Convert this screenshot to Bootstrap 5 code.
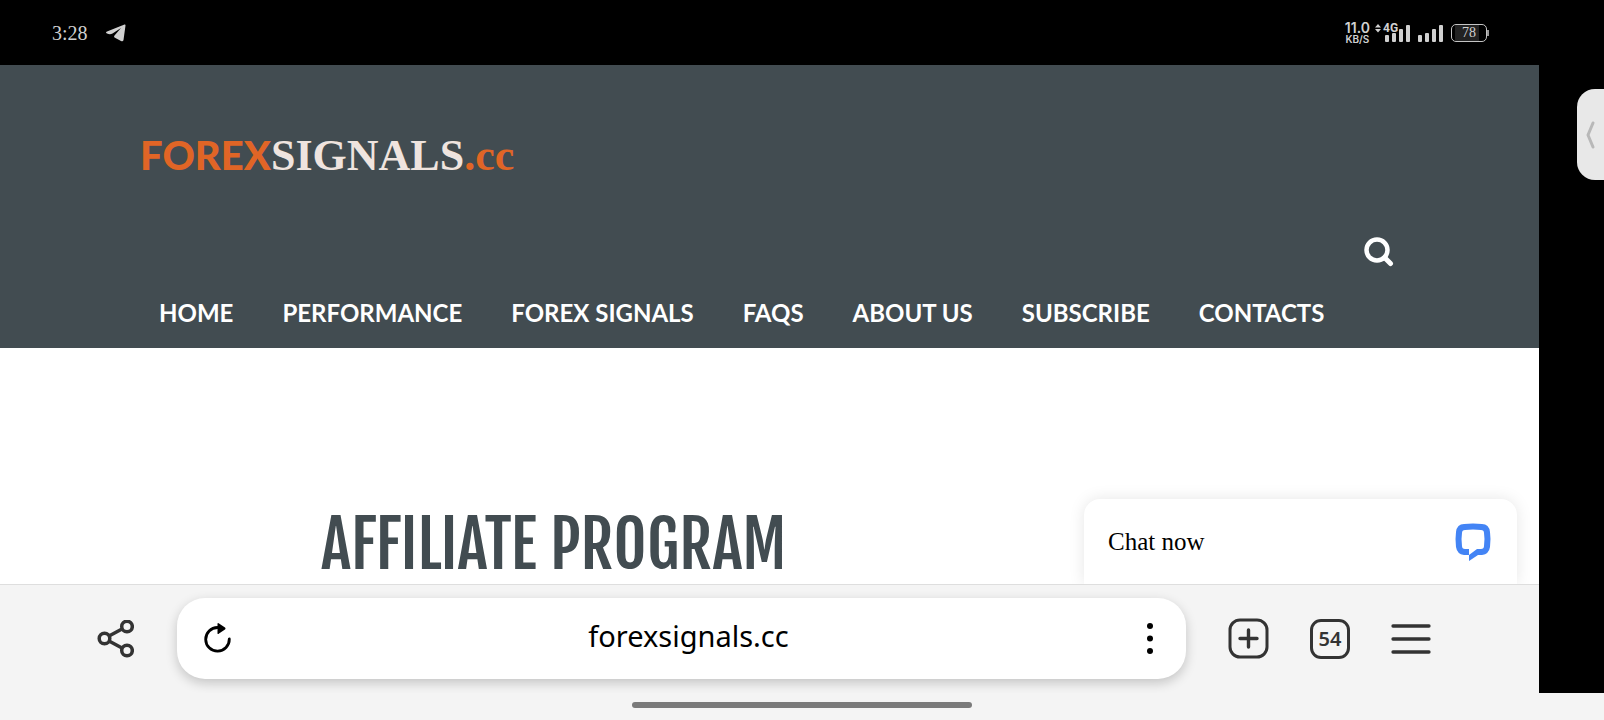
<!DOCTYPE html>
<html lang="en">
<head>
<meta charset="utf-8">
<meta name="viewport" content="width=device-width, initial-scale=1">
<title>Affiliate Program - forexsignals.cc</title>
<link href="https://cdn.jsdelivr.net/npm/bootstrap@5.3.0/dist/css/bootstrap.min.css" rel="stylesheet">
<style>
  :root { --slate: #424c51; --chrome: #f4f4f4; --ink: #333; --gutter: 65px; }
  body { background: #000; font-family: "Lato", sans-serif; color: var(--slate); }
  svg { display: block; }
  .status-bar { height: 65px; padding: 0 117px 0 52px; color: #d0d0d0; }
  .clock { font: 20px/24px "Liberation Serif", serif; }
  .net-speed { font: 600 14px/12px "Inter", sans-serif; text-align: center; }
  .net-speed small { display: block; font-size: 10px; line-height: 10px; font-weight: 600; }
  .net-type { position: absolute; left: 9px; top: -2px; font: 700 12px/12px "Roboto", sans-serif; }
  .battery { width: 36px; height: 18px; border: 1px solid #c4c4c4; border-radius: 5px; font: 14px/16px "Liberation Serif", serif; }
  .battery span { background: #222; width: 24px; margin-left: 3px; padding-left: 7px; }
  .battery::after { content: ""; position: absolute; right: -3px; top: 5px; width: 2px; height: 6px; background: #999; }
  .viewport-col { margin-right: var(--gutter); }
  .site-header { background: var(--slate); padding: 64px 140px 13px; }
  .logo { font-size: 40px; line-height: 52px; font-weight: 900; color: #e06526; }
  .logo .signals { font: 700 44px/52px "Liberation Serif", serif; color: #efe4df; }
  .logo .tld { font: 700 44px/52px "Liberation Serif", serif; }
  .search-row { padding: 55px 5px 0 0; }
  .site-nav { column-gap: 49px; padding-left: 19px; }
  .site-nav a { font-size: 24px; line-height: 44px; font-weight: 700; color: #fff; white-space: nowrap; }
  .page-title { font: 600 64px/72px "Fjalla One", "Roboto Condensed", "Roboto", sans-serif; margin: 0 0 0 321px; padding-top: 161px; }
  .chat { position: absolute; right: 22px; bottom: 0; width: 433px; height: 85px; padding: 0 26px 0 24px; border-radius: 16px 16px 0 0; box-shadow: 0 0 16px rgba(0,0,0,.1); font: 25px/32px "Liberation Serif", serif; color: #000; }
  .browser-bar { background: var(--chrome); border-top: 1px solid #dedede; padding: 13px 108px 14px 97px; height: 109px; }
  .address { height: 81px; border-radius: 28px; margin: 0 42px 0 43px; padding: 0 30px 0 26px; box-shadow: 0 4px 12px rgba(0,0,0,.2); }
  .address input { font: 29px/40px "Noto Sans", sans-serif; color: #000; min-width: 0; padding: 0 0 6px; }
  .browser-bar, .browser-bar svg { color: var(--ink); }
  .tabs-count { width: 40px; height: 40px; margin: 0 41px; border: 3px solid var(--ink); border-radius: 11px; font: 600 20px/32px "Noto Sans", sans-serif; color: var(--ink); }
  .gesture { background: var(--chrome); height: 27px; padding-top: 9px; }
  .gesture span { width: 340px; height: 6px; border-radius: 3px; background: #7a7a7a; }
  .edge-handle { position: absolute; right: 0; top: 89px; width: 27px; height: 91px; border-radius: 18px 0 0 18px; background: #e8e8e8; padding-left: 8px; }
</style>
</head>
<body class="min-vh-100 d-flex flex-column position-relative overflow-hidden">
  <div class="status-bar d-flex align-items-center">
    <span class="clock">3:28</span>
    <svg class="ms-3" width="22" height="18" viewBox="0 0 22 18" fill="#d0d0d0"><path d="M20.500 .5Q21.500 0 21.500 1.500L19.500 16Q19 18 17 17L10.500 13.500Q9.500 12.500 10.500 11.500L17 4 8.500 9.500Q6 11 3 9.500 1 8.500 3 7.500Z"/></svg>
    <div class="ms-auto d-flex align-items-center">
      <div class="net-speed">11.0<small>KB/S</small></div>
      <div class="position-relative ms-1">
        <span class="net-type">4G</span>
        <svg width="36" height="18" viewBox="0 0 36 18" fill="#d0d0d0"><path d="M1 3.500 4 0 7 3.500ZM1 5 4 8.500 7 5Z"/><rect x="11" y="11" width="4" height="7" rx="1"/><rect x="18" y="9" width="4" height="9" rx="1"/><rect x="25" y="5" width="4" height="13" rx="1"/><rect x="32" y="1" width="4" height="17" rx="1"/></svg>
      </div>
      <svg class="ms-2" width="25" height="18" viewBox="0 0 25 18" fill="#d0d0d0"><rect y="11" width="4" height="7" rx="1"/><rect x="7" y="9" width="4" height="9" rx="1"/><rect x="14" y="5" width="4" height="13" rx="1"/><rect x="21" y="1" width="4" height="17" rx="1"/></svg>
      <div class="battery position-relative ms-2 d-flex"><span>78</span></div>
    </div>
  </div>

  <div class="viewport-col flex-grow-1 d-flex flex-column">
    <header class="site-header">
      <a class="logo d-inline-flex align-items-baseline text-decoration-none" href="#"><span>FOREX</span><span class="signals">SIGNALS</span><span class="tld">.cc</span></a>
      <div class="search-row d-flex justify-content-end">
        <button class="btn p-0 border-0" type="button" aria-label="Search"><svg width="30" height="30" viewBox="0 0 30 30" fill="none" stroke="#fff"><circle cx="13" cy="13" r="10.500" stroke-width="4.500"/><path d="M20.500 20.500 26.500 26.500" stroke-width="5" stroke-linecap="round"/></svg></button>
      </div>
      <nav class="site-nav d-flex mt-4">
        <a class="text-decoration-none" href="#">HOME</a><a class="text-decoration-none" href="#">PERFORMANCE</a><a class="text-decoration-none" href="#">FOREX SIGNALS</a><a class="text-decoration-none" href="#">FAQS</a><a class="text-decoration-none" href="#">ABOUT US</a><a class="text-decoration-none" href="#">SUBSCRIBE</a><a class="text-decoration-none" href="#">CONTACTS</a>
      </nav>
    </header>
    <main class="bg-white flex-grow-1 position-relative overflow-hidden">
      <h1 class="page-title">AFFILIATE PROGRAM</h1>
      <button class="chat bg-white border-0 d-flex align-items-center justify-content-between" type="button">
        <span>Chat now</span>
        <svg width="36" height="38" viewBox="0 0 36 38" fill="#4384f5"><path fill-rule="evenodd" d="M9 1Q18 0 27 1 34 1 35 9 36 16 35 24 34 31 27 32H23L14 38V32H9Q2 31 1 24 0 16 1 9 2 1 9 1ZM10 7Q7 7 7 10 6 16 7 23 7 26 10 26H14V32L22 26H26Q29 26 29 23 30 16 29 10 29 7 26 7 18 6 10 7Z"/></svg>
      </button>
    </main>
    <div class="browser-bar d-flex align-items-center">
      <button class="btn p-0 border-0" type="button" aria-label="Share"><svg width="37" height="38" viewBox="0 0 37 38" fill="none" stroke="currentColor" stroke-width="3.500"><circle cx="7.500" cy="18.500" r="5.300"/><circle cx="30" cy="6.500" r="5.300"/><circle cx="30" cy="30.500" r="5.300"/><path d="M12 16 25 9M12 21 25 28"/></svg></button>
      <div class="address bg-white flex-grow-1 d-flex align-items-center">
        <button class="btn p-0 border-0" type="button" aria-label="Reload"><svg width="30" height="32" viewBox="0 0 30 32"><path d="M14.500 4.500A11.800 11.800 0 1 0 26.300 16" fill="none" stroke="#000" stroke-width="2.800" stroke-linecap="round"/><path d="M14.500 .5Q15 -.5 16 .5L22 4.500Q23 5.500 22 6.500L16 10.500Q15 11.500 14.500 10.500Z" fill="#000"/></svg></button>
        <input class="flex-grow-1 border-0 bg-transparent text-center" type="text" value="forexsignals.cc" aria-label="Address">
        <button class="btn p-0 border-0" type="button" aria-label="Page menu"><svg width="12" height="32" viewBox="0 0 12 32" fill="#000"><circle cx="6" cy="3" r="3"/><circle cx="6" cy="15.500" r="3"/><circle cx="6" cy="28" r="3"/></svg></button>
      </div>
      <button class="btn p-0 border-0" type="button" aria-label="New tab"><svg width="41" height="41" viewBox="0 0 41 41" fill="none" stroke="currentColor" stroke-width="3"><rect x="2" y="2" width="37" height="37" rx="10"/><path d="M20.500 12V29M12 20.500H29" stroke-linecap="round" stroke-width="3.400"/></svg></button>
      <button class="tabs-count btn p-0" type="button" aria-label="Tabs">54</button>
      <button class="btn p-0 border-0" type="button" aria-label="Menu"><svg width="40" height="32" viewBox="0 0 40 32" stroke="currentColor" stroke-width="3.300" stroke-linecap="round"><path d="M2 3H38M2 16H38M2 29H38"/></svg></button>
    </div>
  </div>
  <div class="gesture d-flex justify-content-center"><span></span></div>
  <button class="edge-handle border-0" type="button" aria-label="Open side panel"><svg width="10" height="28" viewBox="0 0 10 28" fill="none" stroke="#b8b8b8" stroke-width="3" stroke-linecap="round" stroke-linejoin="round"><path d="M8 2 3 14 8 26"/></svg></button>
<script src="https://cdn.jsdelivr.net/npm/bootstrap@5.3.0/dist/js/bootstrap.bundle.min.js"></script>
</body>
</html>
